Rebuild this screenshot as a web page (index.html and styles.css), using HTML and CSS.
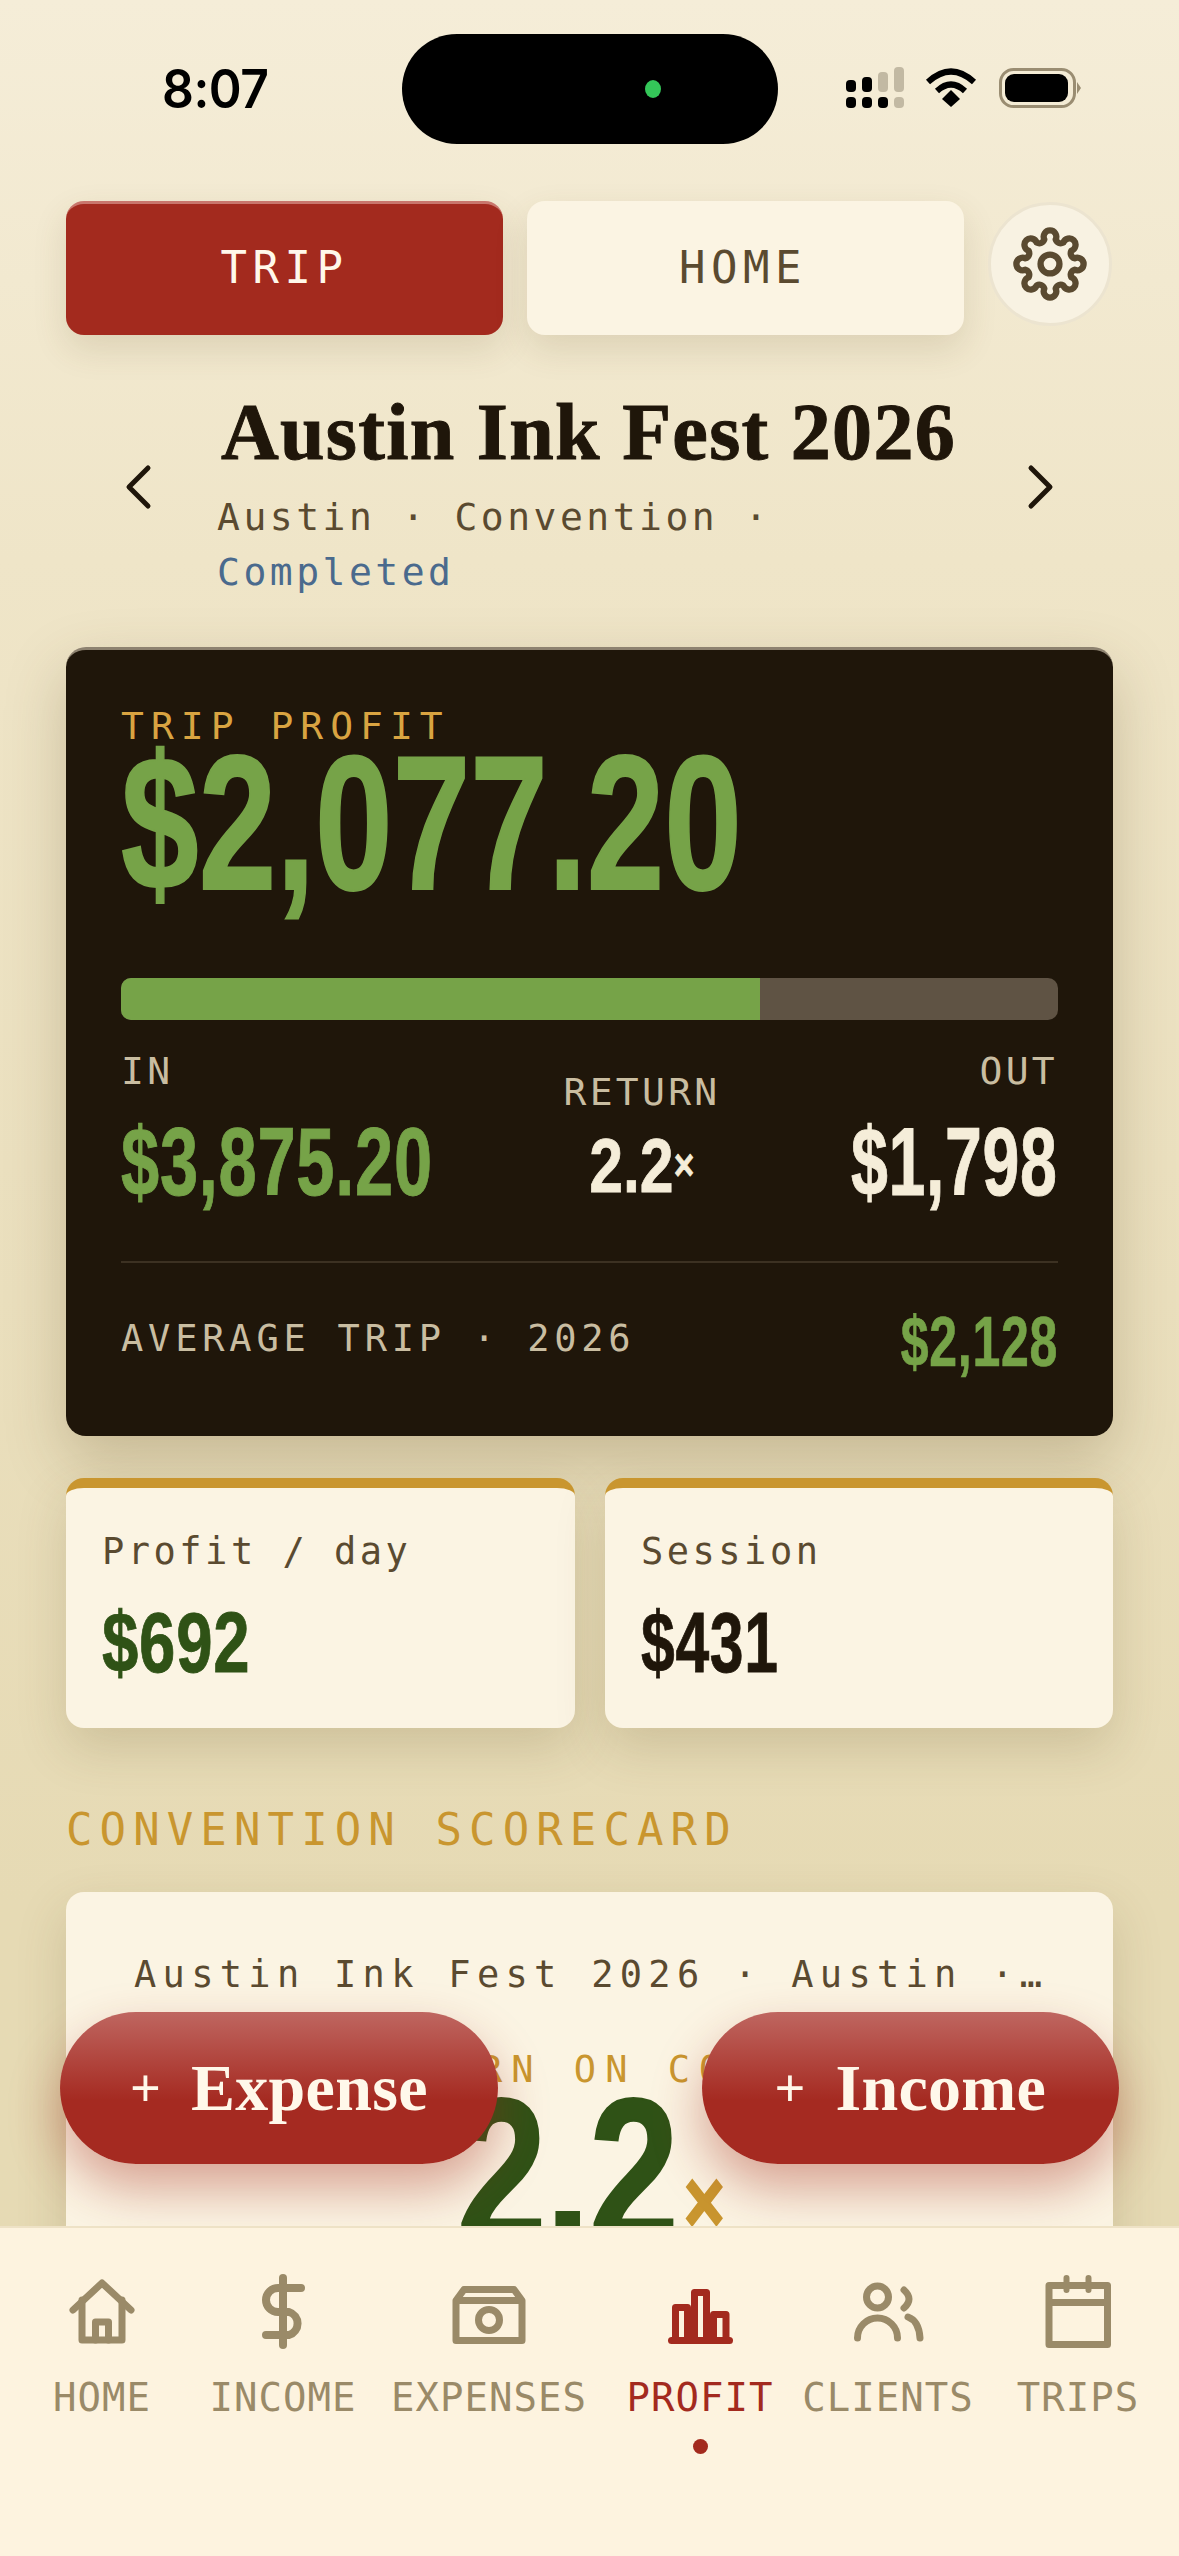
FILE: index.html
```html
<!DOCTYPE html>
<html lang="en">
<head>
  <meta charset="UTF-8">
  <meta name="viewport" content="width=device-width, initial-scale=1.0">
  <title>Austin Ink Fest 2026</title>
  <link rel="stylesheet" href="styles.css">
</head>
<body>
  <div class="statusbar">
    <div class="time">8:07</div>
    <div class="island"><span class="island-dot"></span></div>
    <svg class="status-icons" width="245" height="50" viewBox="0 0 245 50">
      <g fill="#000">
        <rect x="6" y="22" width="10" height="12" rx="4"/>
        <rect x="22" y="19" width="10" height="15" rx="4"/>
        <rect x="6" y="39" width="10" height="11" rx="4"/>
        <rect x="22" y="39" width="10" height="11" rx="4"/>
        <rect x="38" y="39" width="10" height="11" rx="4"/>
      </g>
      <g fill="#c2b9a3">
        <rect x="38" y="14" width="10" height="20" rx="4"/>
        <rect x="54" y="9" width="10" height="25" rx="4"/>
        <rect x="54" y="39" width="10" height="11" rx="4"/>
      </g>
      <g fill="none" stroke="#000" stroke-width="6">
        <path d="M88 24 Q111 3 134 24"/>
        <path d="M97 33 Q111 20 125 33"/>
      </g>
      <path d="M102 41 L111 32 L120 41 L111 49 Z" fill="#000"/>
      <rect x="160.500" y="11.500" width="74" height="37" rx="13" fill="none" stroke="#9a8d72" stroke-width="3"/>
      <rect x="165" y="16" width="63" height="28" rx="9" fill="#000"/>
      <path d="M237 24 L241 30 L237 36 Z" fill="#9a8d72"/>
    </svg>
  </div>

  <div class="page">
    <div class="mode-row">
      <div class="mode-tab mode-tab-active">TRIP</div>
      <div class="mode-tab mode-tab-home">HOME</div>
      <div class="gear-btn">
        <svg width="84" height="84" viewBox="0 0 80 80" fill="none" stroke="currentColor" stroke-width="6" stroke-linejoin="round">
          <path d="M34.600 16.600 A6 6 0 1 1 45.400 16.600 A5 5 0 0 0 52.700 19.600 A6 6 0 1 1 60.400 27.300 A5 5 0 0 0 63.400 34.600 A6 6 0 1 1 63.400 45.400 A5 5 0 0 0 60.400 52.700 A6 6 0 1 1 52.700 60.400 A5 5 0 0 0 45.400 63.400 A6 6 0 1 1 34.600 63.400 A5 5 0 0 0 27.300 60.400 A6 6 0 1 1 19.600 52.700 A5 5 0 0 0 16.600 45.400 A6 6 0 1 1 16.600 34.600 A5 5 0 0 0 19.600 27.300 A6 6 0 1 1 27.300 19.600 A5 5 0 0 0 34.600 16.600 Z"/>
          <circle cx="40" cy="40" r="9"/>
        </svg>
      </div>
    </div>

    <div class="trip-head">
      <svg class="chevron" width="30" height="46" viewBox="0 0 30 46" fill="none" stroke="currentColor" stroke-width="5" stroke-linecap="round" stroke-linejoin="round"><path d="M25 4 L6 23 L25 42"/></svg>
      <div class="trip-text">
        <h1 class="trip-title">Austin Ink Fest 2026</h1>
        <div class="trip-sub">Austin · Convention ·<br><span class="trip-status">Completed</span></div>
      </div>
      <svg class="chevron" width="30" height="46" viewBox="0 0 30 46" fill="none" stroke="currentColor" stroke-width="5" stroke-linecap="round" stroke-linejoin="round"><path d="M5 4 L24 23 L5 42"/></svg>
    </div>

    <div class="hero">
      <div class="hero-label">TRIP PROFIT</div>
      <div class="hero-value"><span class="num">$2,077.20</span></div>
      <div class="bar"><div class="bar-fill" style="width: 68.2%"></div></div>
      <div class="split">
        <div class="split-col">
          <div class="split-label">IN</div>
          <div class="split-value green"><span class="num">$3,875.20</span></div>
        </div>
        <div class="split-col split-mid">
          <div class="split-label">RETURN</div>
          <div class="split-return"><span class="num">2.2<span class="times">×</span></span></div>
        </div>
        <div class="split-col split-right">
          <div class="split-label">OUT</div>
          <div class="split-value"><span class="num">$1,798</span></div>
        </div>
      </div>
      <div class="hero-foot">
        <div class="foot-label">AVERAGE TRIP · 2026</div>
        <div class="foot-value"><span class="num">$2,128</span></div>
      </div>
    </div>

    <div class="stats">
      <div class="stat">
        <div class="stat-label">Profit / day</div>
        <div class="stat-value stat-green"><span class="num">$692</span></div>
      </div>
      <div class="stat">
        <div class="stat-label">Session</div>
        <div class="stat-value"><span class="num">$431</span></div>
      </div>
    </div>

    <div class="section-title">CONVENTION SCORECARD</div>

    <div class="score">
      <div class="score-name">Austin Ink Fest 2026 · Austin · Convention</div>
      <div class="score-label">RETURN ON COSTS</div>
      <div class="score-value"><span class="num">2.2<span class="score-times">×</span></span></div>
    </div>
  </div>

  <div class="fab fab-expense"><span class="fab-plus">+</span>Expense</div>
  <div class="fab fab-income"><span class="fab-plus">+</span>Income</div>

  <nav class="tabbar">
    <div class="tab">
      <svg width="80" height="80" viewBox="0 0 80 80" fill="none" stroke="currentColor" stroke-width="7" stroke-linecap="round" stroke-linejoin="round">
        <path d="M11 38 L40 11 L69 38"/>
        <path d="M20 28 V68 H60 V28"/>
        <path d="M33.500 68 V50 H46.500 V68"/>
      </svg>
      <div class="tab-label">HOME</div>
    </div>
    <div class="tab">
      <svg width="80" height="80" viewBox="0 0 80 80" fill="none" stroke="currentColor" stroke-width="8" stroke-linecap="round" stroke-linejoin="round">
        <path d="M40 6 V73"/>
        <path d="M58 16 H35 A12 12 0 0 0 35 40 H46 A12 12 0 0 1 46 63 H23"/>
      </svg>
      <div class="tab-label">INCOME</div>
    </div>
    <div class="tab">
      <svg width="80" height="80" viewBox="0 0 80 80" fill="none" stroke="currentColor" stroke-width="7" stroke-linejoin="round">
        <path d="M7 28.500 L15 17.500 H65 L73 28.500 V68.500 H7 Z M7 28.500 H73"/>
        <circle cx="40" cy="48" r="10.500"/>
      </svg>
      <div class="tab-label">EXPENSES</div>
    </div>
    <div class="tab tab-active">
      <svg width="80" height="80" viewBox="0 0 80 80" fill="none" stroke="currentColor" stroke-width="7" stroke-linecap="round" stroke-linejoin="round">
        <rect x="15.500" y="35.500" width="12" height="33"/>
        <rect x="34.500" y="20.500" width="12" height="48"/>
        <rect x="53.500" y="42.500" width="12.500" height="26"/>
        <path d="M11.500 68.500 H69.500"/>
      </svg>
      <div class="tab-label">PROFIT</div>
      <span class="tab-dot"></span>
    </div>
    <div class="tab">
      <svg width="80" height="80" viewBox="0 0 80 80" fill="none" stroke="currentColor" stroke-width="7" stroke-linecap="round" stroke-linejoin="round">
        <circle cx="29.500" cy="25" r="11"/>
        <path d="M9.500 66 A20 20 0 0 1 49.500 66"/>
        <path d="M56 18 Q66 27 56 36"/>
        <path d="M60 45 Q71 49 72 66"/>
      </svg>
      <div class="tab-label">CLIENTS</div>
    </div>
    <div class="tab">
      <svg width="80" height="80" viewBox="0 0 80 80" fill="none" stroke="currentColor" stroke-width="7" stroke-linecap="round" stroke-linejoin="round">
        <path d="M11 13.500 H69.500 V72.500 H11 Z M11 30.500 H69.500"/>
        <path d="M28.500 6 V18 M50.500 6 V18" stroke-width="6"/>
      </svg>
      <div class="tab-label">TRIPS</div>
    </div>
  </nav>
</body>
</html>
```

FILE: styles.css
```css
html, body {
  margin: 0;
  padding: 0;
}

body {
  position: relative;
  width: 1179px;
  height: 2556px;
  overflow: hidden;
  font-family: "DejaVu Sans Mono", "Liberation Mono", monospace;
  background: linear-gradient(180deg, #f5edd8 0, #efe5c8 560px, #e6dab4 1900px);
  color: #1f160a;
}

/* condensed figures: no narrow face installed, so squeeze Liberation Sans */
.num {
  display: inline-block;
  font-family: "Liberation Sans", sans-serif;
  font-weight: 700;
  white-space: nowrap;
  -webkit-text-stroke: 0.01em currentColor;
  transform-origin: left center;
}

.statusbar {
  display: grid;
  grid-template-columns: 402px 376px 1fr;
  align-items: center;
  height: 110px;
  padding-top: 34px;
}

.time {
  padding-left: 162px;
  font-family: Inter, "Liberation Sans", sans-serif;
  font-weight: 600;
  font-size: 53px;
  letter-spacing: -0.5px;
  color: #000;
  transform: scaleX(0.94);
  transform-origin: 162px 50%;
}

.island {
  display: flex;
  align-items: center;
  justify-content: flex-end;
  height: 110px;
  padding-right: 117px;
  box-sizing: border-box;
  background: #000;
  border-radius: 55px;
}

.island-dot {
  width: 16px;
  height: 18px;
  border-radius: 50%;
  background: #34c759;
}

.status-icons {
  margin-left: 62px;
  margin-top: -12px;
}

.page {
  display: flex;
  flex-direction: column;
  padding: 57px 66px 0;
}

.mode-row {
  display: flex;
  align-items: flex-start;
  gap: 24px;
}

.mode-tab {
  flex: 0 0 437px;
  height: 134px;
  line-height: 134px;
  box-sizing: border-box;
  text-align: center;
  font-size: 44px;
  letter-spacing: 5.5px;
  color: #5a4a30;
  background: #fbf4e3;
  border-radius: 18px;
  box-shadow: 0 14px 34px rgba(90, 70, 30, 0.14);
}

.mode-tab-active {
  color: #fff8ea;
  background: #a32a1e;
  border-top: 3px solid #c9766c;
  line-height: 128px;
}

.mode-tab-home {
  padding-right: 5px;
}

.gear-btn {
  display: flex;
  align-items: center;
  justify-content: center;
  flex: 0 0 124px;
  height: 124px;
  margin-top: 1px;
  border-radius: 50%;
  box-sizing: border-box;
  border: 3px solid #ece4d0;
  background: #f8f2e2;
  color: #5a4a30;
}

.trip-head {
  display: flex;
  align-items: center;
  margin-top: 55px;
  padding: 0 57px;
}

.chevron {
  flex: none;
  color: #1f160a;
  margin-top: -16px;
}

.trip-text {
  flex: 1;
  padding-left: 64px;
}

.trip-title {
  margin: -3px 0 0 4px;
  font-family: "Liberation Serif", serif;
  font-weight: 700;
  font-size: 80px;
  line-height: 90px;
  letter-spacing: 1.300px;
  white-space: nowrap;
  -webkit-text-stroke: 1px currentColor;
  color: #1f160a;
}

.trip-sub {
  margin-top: 13px;
  font-size: 38px;
  line-height: 55px;
  letter-spacing: 3.5px;
  color: #5a4a30;
}

.trip-status {
  color: #4a6a8d;
}

.hero {
  margin-top: 47px;
  padding: 53px 55px 0;
  height: 789px;
  box-sizing: border-box;
  background: #1f160a;
  border-top: 3px solid #8d8270;
  border-radius: 20px;
  box-shadow: 0 24px 60px rgba(90, 70, 30, 0.25);
}

.hero-label {
  font-size: 38px;
  line-height: 46px;
  letter-spacing: 7px;
  color: #d9a441;
}

.hero-value {
  margin-top: -11px;
  font-size: 192px;
  line-height: 170px;
  color: #76a348;
}

.hero-value .num {
  transform: scaleX(0.727);
}

.bar {
  height: 42px;
  margin-top: 70px;
  background: #5f5344;
  border-radius: 10px;
  overflow: hidden;
}

.bar-fill {
  height: 100%;
  background: #76a348;
}

.split {
  display: grid;
  grid-template-columns: 1fr 160px 336px;
  align-items: end;
  margin-top: 28px;
}

.split-col {
  display: flex;
  flex-direction: column;
  align-items: flex-start;
  min-width: 0;
}

.split-mid {
  align-items: center;
}

.split-right {
  align-items: flex-end;
}

.split-label {
  font-size: 38px;
  line-height: 46px;
  letter-spacing: 3.300px;
  color: #c9bda1;
}

.split-value {
  margin-top: 18px;
  font-size: 96px;
  line-height: 100px;
  letter-spacing: 1px;
  color: #f5edd9;
}

.split-value .num {
  transform: scaleX(0.69);
}

.split-right .num {
  transform-origin: right center;
}

.split-value.green {
  color: #76a348;
}

.split-value.green .num {
  transform: scaleX(0.715);
}

.split-return {
  margin: 2px 0 -2px;
  font-size: 76px;
  line-height: 96px;
  color: #f5edd9;
}

.split-return .num {
  transform: scaleX(0.8);
  transform-origin: center;
}

.times {
  font-size: 44px;
  vertical-align: 12px;
}

.hero-foot {
  display: flex;
  justify-content: space-between;
  align-items: center;
  margin-top: 49px;
  padding-top: 30px;
  border-top: 2px solid #3c3122;
}

.foot-label {
  margin-top: -3px;
  font-size: 37px;
  letter-spacing: 4.800px;
  color: #c9bda1;
}

.foot-value {
  margin-top: 4px;
  font-size: 70px;
  line-height: 90px;
  letter-spacing: 1px;
  color: #76a348;
}

.foot-value .num {
  transform: scaleX(0.715);
  transform-origin: right center;
}

.stats {
  display: grid;
  grid-template-columns: 509px 508px;
  gap: 30px;
  margin-top: 42px;
}

.stat {
  height: 250px;
  box-sizing: border-box;
  padding: 41px 36px 0;
  background: #fbf4e3;
  border-top: 10px solid #c9962f;
  border-radius: 18px;
  box-shadow: 0 20px 50px rgba(90, 70, 30, 0.18);
}

.stat-label {
  font-size: 37px;
  line-height: 46px;
  letter-spacing: 3.500px;
  color: #5a4a30;
}

.stat-value {
  margin-top: 17px;
  font-size: 86px;
  line-height: 100px;
  letter-spacing: 1px;
  color: #1f160a;
}

.stat-value .num {
  transform: scaleX(0.705);
}

.stat-green {
  color: #2f5216;
}

.stat-green .num {
  transform: scaleX(0.76);
}

.section-title {
  margin-top: 77px;
  font-size: 44px;
  line-height: 50px;
  letter-spacing: 7.100px;
  color: #c9962f;
  white-space: nowrap;
}

.score {
  margin-top: 37px;
  height: 600px;
  box-sizing: border-box;
  padding: 60px 68px 0;
  text-align: center;
  background: #fbf4e3;
  border-radius: 18px;
  box-shadow: 0 20px 50px rgba(90, 70, 30, 0.18);
}

.score-name {
  font-size: 37px;
  line-height: 46px;
  letter-spacing: 6.300px;
  color: #5a4a30;
  white-space: nowrap;
  overflow: hidden;
  text-overflow: ellipsis;
}

.score-label {
  margin-top: 49px;
  font-size: 37px;
  line-height: 46px;
  letter-spacing: 9px;
  color: #c9962f;
  white-space: nowrap;
}

.score-value {
  margin-top: -22px;
  font-size: 208px;
  line-height: 200px;
  letter-spacing: -2px;
  color: #2f5216;
}

.score-value .num {
  transform: scaleX(0.78);
  transform-origin: center;
}

.score-times {
  font-size: 90px;
  color: #c9962f;
  vertical-align: 10px;
  margin-left: 8px;
}

.fab {
  position: absolute;
  top: 2012px;
  display: flex;
  align-items: center;
  justify-content: center;
  gap: 30px;
  height: 152px;
  border-radius: 76px;
  font-family: "Liberation Serif", serif;
  font-weight: 700;
  font-size: 66px;
  letter-spacing: 0.3px;
  color: #fff8ea;
  background: linear-gradient(180deg, #bf6660 0, #a52a21 58%);
  box-shadow: 0 24px 50px rgba(163, 42, 30, 0.4);
}

.fab-expense {
  left: 60px;
  width: 438px;
}

.fab-income {
  left: 702px;
  width: 417px;
}

.fab-plus {
  font-family: "Liberation Sans", sans-serif;
  font-weight: 400;
  font-size: 52px;
}

.tabbar {
  position: absolute;
  left: 0;
  right: 0;
  bottom: 0;
  display: grid;
  grid-template-columns: 164px 198px 214px 208px 168px 212px;
  align-items: start;
  height: 330px;
  box-sizing: border-box;
  padding: 44px 0 0 20px;
  background: #fdf3df;
  border-top: 2px solid #eee2c6;
}

.tab {
  display: flex;
  flex-direction: column;
  align-items: center;
  color: #9a8a68;
}

.tab-active {
  color: #a32a1e;
}

.tab-label {
  margin-top: 24px;
  font-size: 39px;
  line-height: 44px;
  letter-spacing: 1px;
  white-space: nowrap;
}

.tab-dot {
  width: 15px;
  height: 15px;
  margin-top: 19px;
  border-radius: 50%;
  background: #a32a1e;
}
```
